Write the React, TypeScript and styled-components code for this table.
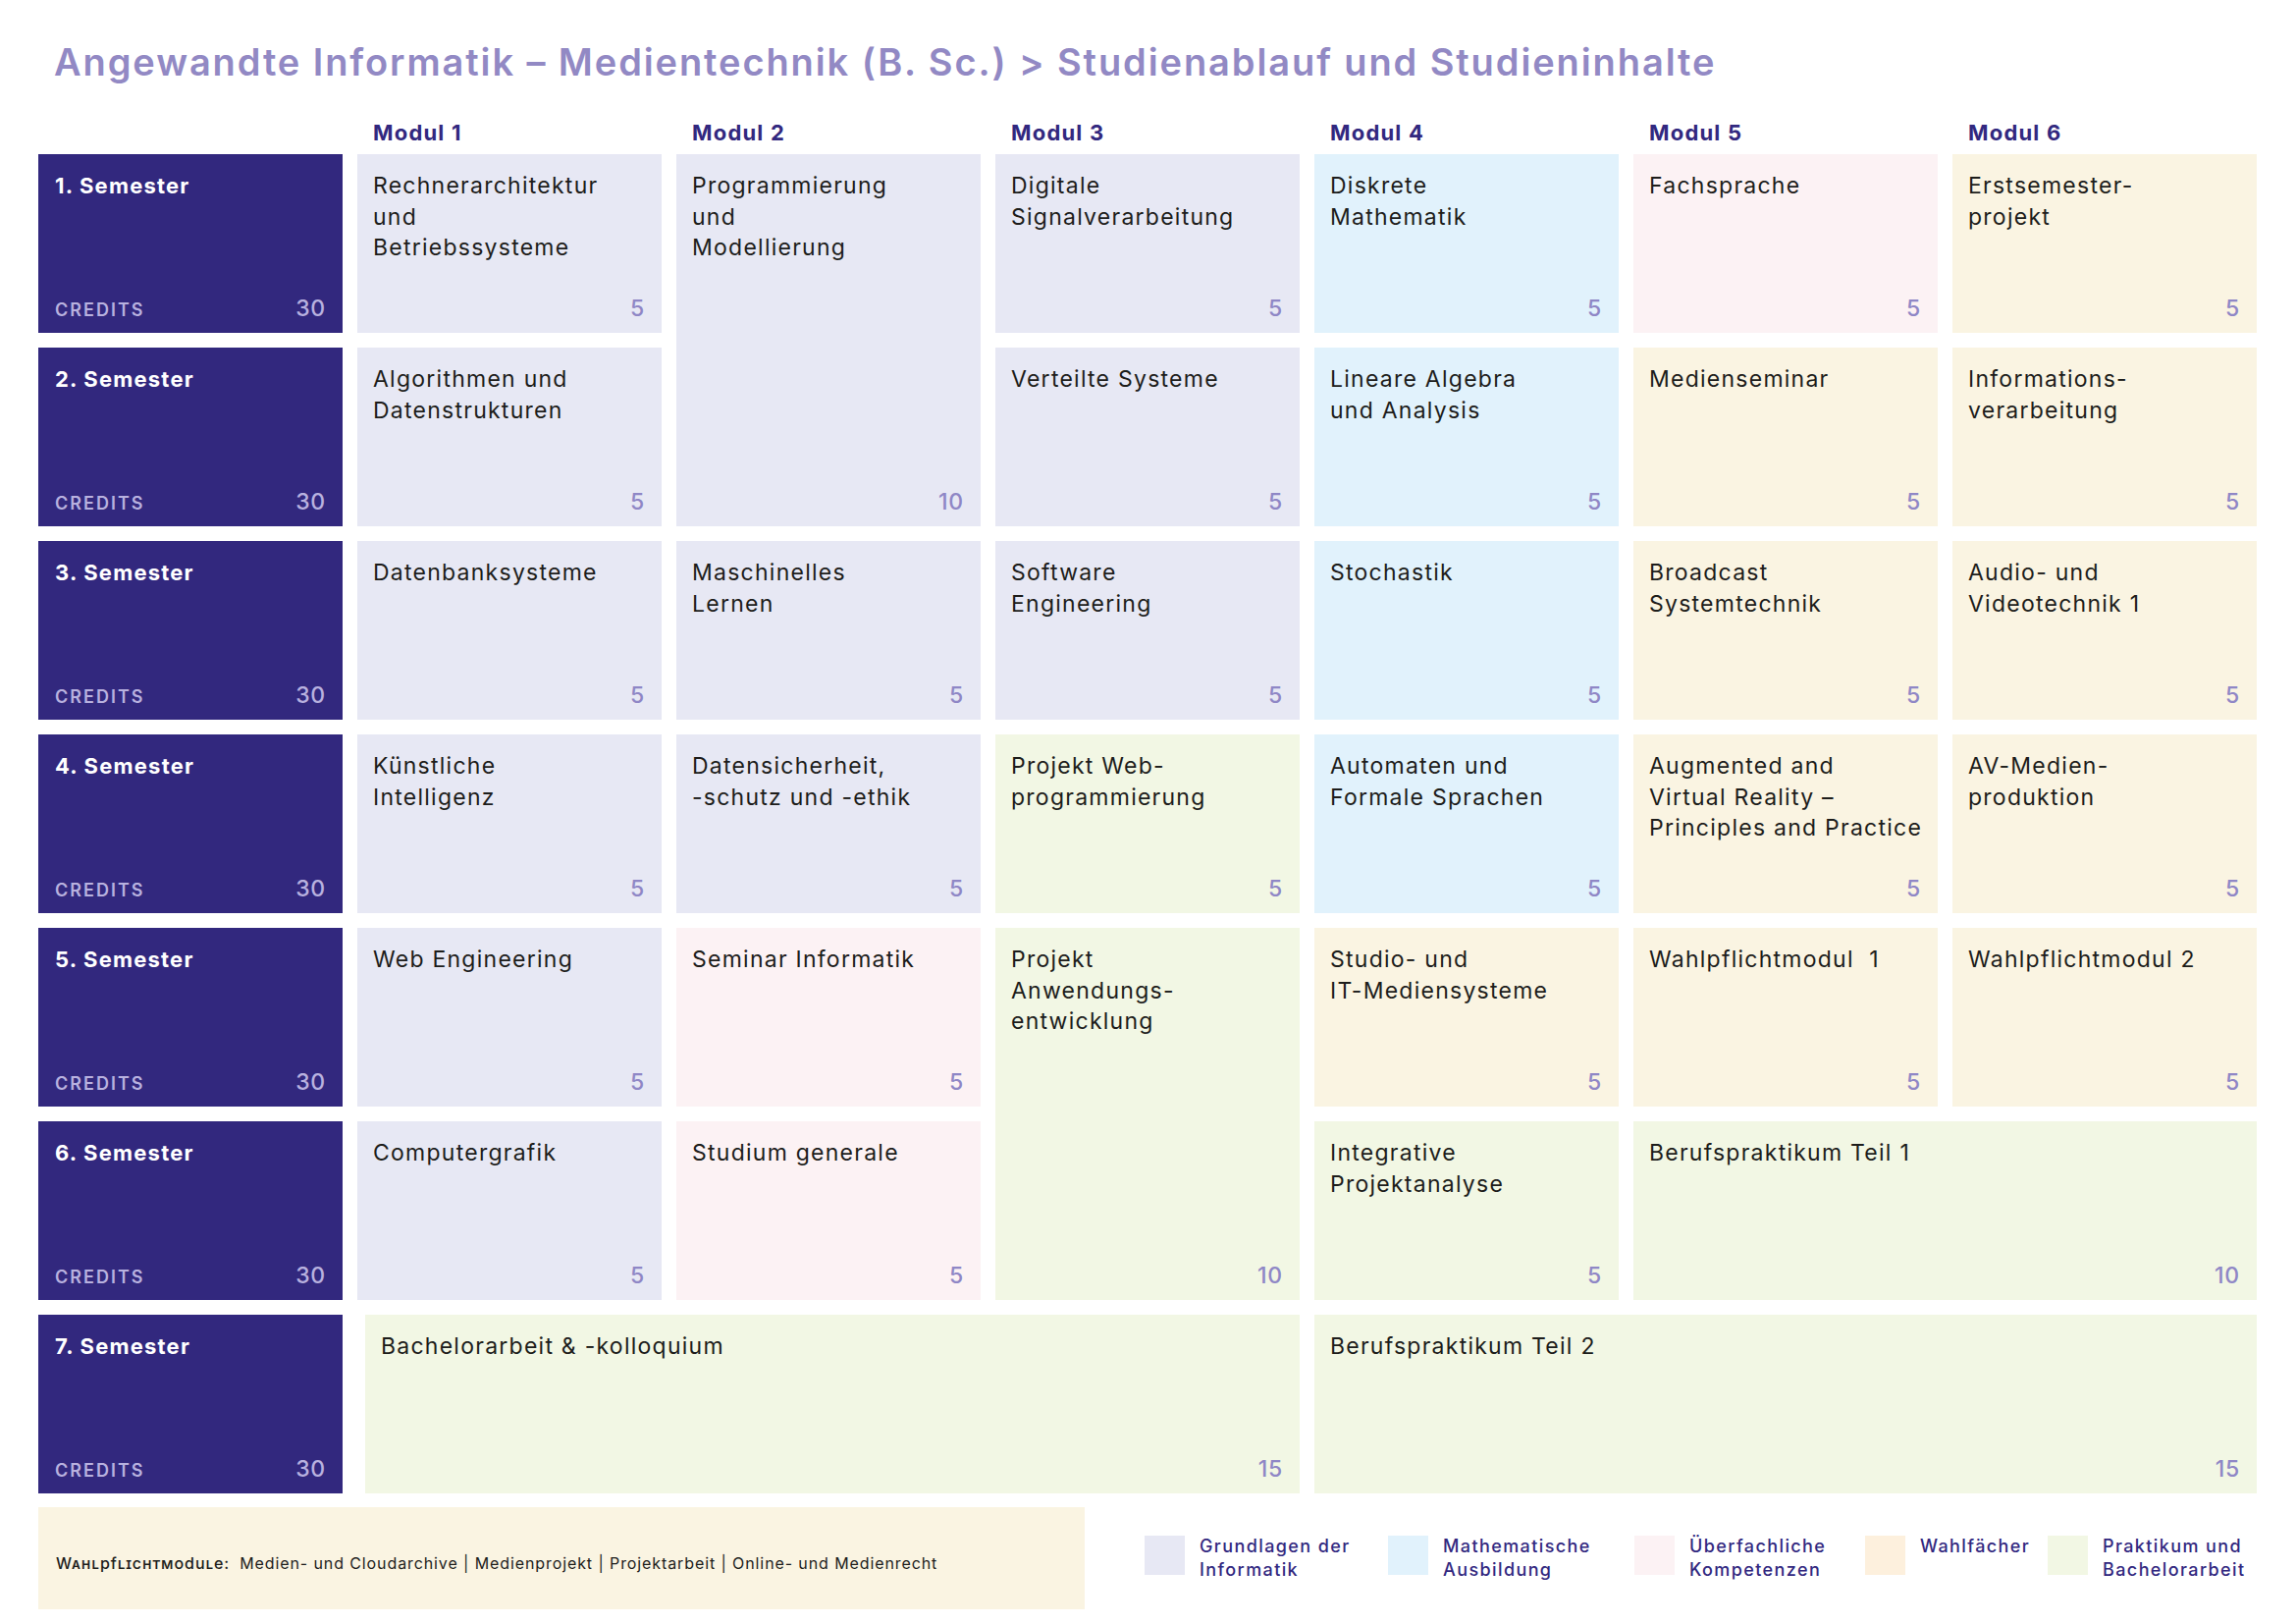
import React from 'react';
import styled, { createGlobalStyle } from 'styled-components';

type Kind = 'info' | 'math' | 'soft' | 'elective' | 'practice';

const palette: Record<Kind, string> = {
  info: '#e7e8f4',
  math: '#e1f2fc',
  soft: '#fcf2f4',
  elective: '#faf4e2',
  practice: '#f2f7e4',
};

const GlobalStyle = createGlobalStyle`
  body {
    margin: 0;
    background: #ffffff;
    font-family: Inter, "Noto Sans", "Liberation Sans", sans-serif;
  }
`;

const Page = styled.div`
  width: 2339px;
  height: 1654px;
  box-sizing: border-box;
  padding: 41px 0 0 39px;
`;

const Title = styled.h1`
  margin: 0;
  padding-left: 16px;
  font-size: 38px;
  line-height: 44px;
  font-weight: 600;
  color: #9289c4;
  letter-spacing: 1.9px;
`;

const Columns = styled.div`
  display: grid;
  grid-template-columns: repeat(7, 310px);
  column-gap: 15px;
`;

const HeadRow = styled(Columns)`
  margin-top: 35px;
  height: 30px;
`;

const ModuleHead = styled.div`
  padding-left: 16px;
  font-size: 22px;
  line-height: 30px;
  font-weight: 700;
  letter-spacing: 1.2px;
  color: #32287f;
`;

const Board = styled(Columns)`
  margin-top: 7px;
  grid-auto-rows: 182px;
  row-gap: 15px;
`;

const SemesterBox = styled.div<{ $row: number }>`
  grid-column: 1;
  grid-row: ${(p) => p.$row};
  background: #32287e;
  display: flex;
  flex-direction: column;
  justify-content: space-between;
  padding: 17px 17px 9px 17px;
  box-sizing: border-box;
`;

const SemesterName = styled.div`
  font-size: 22px;
  line-height: 31px;
  font-weight: 700;
  letter-spacing: 1.2px;
  color: #ffffff;
`;

const CreditRow = styled.div`
  display: flex;
  align-items: baseline;
  justify-content: space-between;
  color: #b8b1df;
`;

const CreditLabel = styled.span`
  font-size: 18px;
  font-weight: 600;
  letter-spacing: 2px;
`;

const CreditValue = styled.span`
  font-size: 23px;
  line-height: 31px;
  font-weight: 500;
  letter-spacing: 0.8px;
`;

const ModuleBox = styled.div<{
  $kind: Kind;
  $row: number;
  $col: number;
  $rows: number;
  $cols: number;
  $shift: number;
}>`
  grid-column: ${(p) => p.$col + 1} / span ${(p) => p.$cols};
  grid-row: ${(p) => p.$row} / span ${(p) => p.$rows};
  margin-left: ${(p) => p.$shift}px;
  background: ${(p) => palette[p.$kind]};
  display: flex;
  flex-direction: column;
  justify-content: space-between;
  padding: 17px 17px 9px 16px;
  box-sizing: border-box;
`;

const ModuleName = styled.div`
  font-size: 23px;
  line-height: 31.5px;
  font-weight: 400;
  letter-spacing: 1.25px;
  white-space: nowrap;
  color: #1d1d1b;
`;

const ModuleCredits = styled.div`
  align-self: flex-end;
  font-size: 23px;
  line-height: 31px;
  font-weight: 500;
  letter-spacing: 0.8px;
  color: #8f87c6;
`;

const Footer = styled.div`
  margin-top: 14px;
  display: flex;
  align-items: center;
`;

const ElectiveNote = styled.div`
  width: 1066px;
  height: 104px;
  box-sizing: border-box;
  padding: 10px 0 0 18px;
  background: #faf4e2;
  display: flex;
  align-items: center;
  font-size: 16px;
  letter-spacing: 0.9px;
  color: #1d1d1b;
`;

const NoteLabel = styled.span`
  font-variant: small-caps;
  font-weight: 500;
  margin-right: 10px;
`;

const Legend = styled.div`
  margin-left: 61px;
  display: grid;
  grid-template-columns: 248px 251px 235px 186px auto;
`;

const LegendItem = styled.div`
  display: flex;
  align-items: flex-start;
  gap: 15px;
`;

const Swatch = styled.div<{ $color: string }>`
  width: 41px;
  height: 40px;
  flex: none;
  background: ${(p) => p.$color};
`;

const LegendText = styled.div`
  font-size: 18px;
  line-height: 24px;
  margin-top: -1px;
  font-weight: 500;
  letter-spacing: 1.4px;
  color: #32287f;
`;

type Mod = {
  row: number;
  col: number;
  rows?: number;
  cols?: number;
  shift?: number;
  kind: Kind;
  lines: string[];
  credits: number;
};

const modules: Mod[] = [
  { row: 1, col: 1, kind: 'info', lines: ['Rechnerarchitektur', 'und', 'Betriebssysteme'], credits: 5 },
  { row: 1, col: 2, rows: 2, kind: 'info', lines: ['Programmierung', 'und', 'Modellierung'], credits: 10 },
  { row: 1, col: 3, kind: 'info', lines: ['Digitale', 'Signalverarbeitung'], credits: 5 },
  { row: 1, col: 4, kind: 'math', lines: ['Diskrete', 'Mathematik'], credits: 5 },
  { row: 1, col: 5, kind: 'soft', lines: ['Fachsprache'], credits: 5 },
  { row: 1, col: 6, kind: 'elective', lines: ['Erstsemester-', 'projekt'], credits: 5 },

  { row: 2, col: 1, kind: 'info', lines: ['Algorithmen und', 'Datenstrukturen'], credits: 5 },
  { row: 2, col: 3, kind: 'info', lines: ['Verteilte Systeme'], credits: 5 },
  { row: 2, col: 4, kind: 'math', lines: ['Lineare Algebra', 'und Analysis'], credits: 5 },
  { row: 2, col: 5, kind: 'elective', lines: ['Medienseminar'], credits: 5 },
  { row: 2, col: 6, kind: 'elective', lines: ['Informations-', 'verarbeitung'], credits: 5 },

  { row: 3, col: 1, kind: 'info', lines: ['Datenbanksysteme'], credits: 5 },
  { row: 3, col: 2, kind: 'info', lines: ['Maschinelles', 'Lernen'], credits: 5 },
  { row: 3, col: 3, kind: 'info', lines: ['Software', 'Engineering'], credits: 5 },
  { row: 3, col: 4, kind: 'math', lines: ['Stochastik'], credits: 5 },
  { row: 3, col: 5, kind: 'elective', lines: ['Broadcast', 'Systemtechnik'], credits: 5 },
  { row: 3, col: 6, kind: 'elective', lines: ['Audio- und', 'Videotechnik 1'], credits: 5 },

  { row: 4, col: 1, kind: 'info', lines: ['Künstliche', 'Intelligenz'], credits: 5 },
  { row: 4, col: 2, kind: 'info', lines: ['Datensicherheit,', '-schutz und -ethik'], credits: 5 },
  { row: 4, col: 3, kind: 'practice', lines: ['Projekt Web-', 'programmierung'], credits: 5 },
  { row: 4, col: 4, kind: 'math', lines: ['Automaten und', 'Formale Sprachen'], credits: 5 },
  { row: 4, col: 5, kind: 'elective', lines: ['Augmented and', 'Virtual Reality –', 'Principles and Practice'], credits: 5 },
  { row: 4, col: 6, kind: 'elective', lines: ['AV-Medien-', 'produktion'], credits: 5 },

  { row: 5, col: 1, kind: 'info', lines: ['Web Engineering'], credits: 5 },
  { row: 5, col: 2, kind: 'soft', lines: ['Seminar Informatik'], credits: 5 },
  { row: 5, col: 3, rows: 2, kind: 'practice', lines: ['Projekt', 'Anwendungs-', 'entwicklung'], credits: 10 },
  { row: 5, col: 4, kind: 'elective', lines: ['Studio- und', 'IT-Mediensysteme'], credits: 5 },
  { row: 5, col: 5, kind: 'elective', lines: ['Wahlpflichtmodul\u00a0 1'], credits: 5 },
  { row: 5, col: 6, kind: 'elective', lines: ['Wahlpflichtmodul 2'], credits: 5 },

  { row: 6, col: 1, kind: 'info', lines: ['Computergrafik'], credits: 5 },
  { row: 6, col: 2, kind: 'soft', lines: ['Studium generale'], credits: 5 },
  { row: 6, col: 4, kind: 'practice', lines: ['Integrative', 'Projektanalyse'], credits: 5 },
  { row: 6, col: 5, cols: 2, kind: 'practice', lines: ['Berufspraktikum Teil 1'], credits: 10 },

  { row: 7, col: 1, cols: 3, shift: 8, kind: 'practice', lines: ['Bachelorarbeit & -kolloquium'], credits: 15 },
  { row: 7, col: 4, cols: 3, kind: 'practice', lines: ['Berufspraktikum Teil 2'], credits: 15 },
];

const legend = [
  { color: '#e7e8f4', lines: ['Grundlagen der', 'Informatik'] },
  { color: '#e1f2fc', lines: ['Mathematische', 'Ausbildung'] },
  { color: '#fcf2f4', lines: ['Überfachliche', 'Kompetenzen'] },
  { color: '#fdf0dd', lines: ['Wahlfächer'] },
  { color: '#f2f7e4', lines: ['Praktikum und', 'Bachelorarbeit'] },
];

const semesters = [1, 2, 3, 4, 5, 6, 7];

export default function App() {
  return (
    <Page>
      <GlobalStyle />
      <Title>Angewandte Informatik – Medientechnik (B. Sc.) &gt; Studienablauf und Studieninhalte</Title>

      <HeadRow>
        <div />
        {[1, 2, 3, 4, 5, 6].map((n) => (
          <ModuleHead key={n}>Modul {n}</ModuleHead>
        ))}
      </HeadRow>

      <Board>
        {semesters.map((s) => (
          <SemesterBox key={s} $row={s}>
            <SemesterName>{s}. Semester</SemesterName>
            <CreditRow>
              <CreditLabel>CREDITS</CreditLabel>
              <CreditValue>30</CreditValue>
            </CreditRow>
          </SemesterBox>
        ))}
        {modules.map((m) => (
          <ModuleBox
            key={`${m.row}-${m.col}`}
            $kind={m.kind}
            $row={m.row}
            $col={m.col}
            $rows={m.rows ?? 1}
            $cols={m.cols ?? 1}
            $shift={m.shift ?? 0}
          >
            <ModuleName>
              {m.lines.map((l, i) => (
                <div key={i}>{l}</div>
              ))}
            </ModuleName>
            <ModuleCredits>{m.credits}</ModuleCredits>
          </ModuleBox>
        ))}
      </Board>

      <Footer>
        <ElectiveNote>
          <NoteLabel>Wahlpflichtmodule:</NoteLabel>
          Medien- und Cloudarchive | Medienprojekt | Projektarbeit | Online- und Medienrecht
        </ElectiveNote>
        <Legend>
          {legend.map((l) => (
            <LegendItem key={l.lines[0]}>
              <Swatch $color={l.color} />
              <LegendText>
                {l.lines.map((t) => (
                  <div key={t}>{t}</div>
                ))}
              </LegendText>
            </LegendItem>
          ))}
        </Legend>
      </Footer>
    </Page>
  );
}
